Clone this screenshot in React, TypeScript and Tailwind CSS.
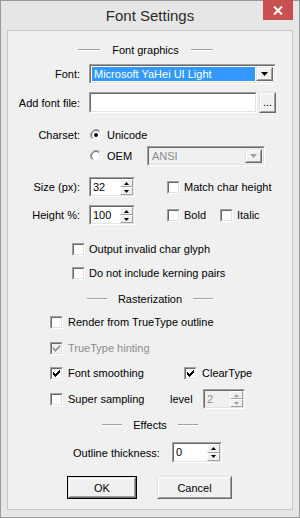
import clsx from 'clsx';
import type { ReactNode } from 'react';

// classic 3D edges
const sunkenOuter = 'border border-t-[#a0a0a0] border-l-[#a0a0a0] border-r-white border-b-white';
const sunkenInner = 'border border-t-[#696969] border-l-[#696969] border-r-[#e3e3e3] border-b-[#e3e3e3]';
const raisedOuter = 'border border-t-[#e3e3e3] border-l-[#e3e3e3] border-r-[#696969] border-b-[#696969]';
const raisedInner = 'border border-t-white border-l-white border-r-[#a0a0a0] border-b-[#a0a0a0]';

function Sunken({ className, inner, children }: { className?: string; inner?: string; children?: ReactNode }) {
  return (
    <div className={clsx('flex shrink-0', sunkenOuter, className)}>
      <div className={clsx('flex flex-1 min-w-0', sunkenInner, inner)}>{children}</div>
    </div>
  );
}

function Raised({ className, children }: { className?: string; children?: ReactNode }) {
  return (
    <div className={clsx('flex shrink-0', raisedOuter, className)}>
      <div className={clsx('flex flex-1 items-center justify-center bg-[#f0f0f0]', raisedInner)}>{children}</div>
    </div>
  );
}

function Arrow({ dir, color = '#000', w = 7, h = 4 }: { dir: 'up' | 'down'; color?: string; w?: number; h?: number }) {
  const pts = dir === 'down' ? `0,0 ${w},0 ${w / 2},${h}` : `0,${h} ${w},${h} ${w / 2},0`;
  return (
    <svg width={w} height={h} viewBox={`0 0 ${w} ${h}`}>
      <polygon points={pts} fill={color} />
    </svg>
  );
}

function SpinButtons({ disabled }: { disabled?: boolean }) {
  const c = disabled ? '#a0a0a0' : '#000';
  return (
    <div className="flex flex-col w-[13px] shrink-0">
      <div className={clsx('flex-1 flex items-center justify-center bg-[#f0f0f0]', raisedInner)}>
        <Arrow dir="up" color={c} w={5} h={3} />
      </div>
      <div className={clsx('flex-1 flex items-center justify-center bg-[#f0f0f0]', raisedInner)}>
        <Arrow dir="down" color={c} w={5} h={3} />
      </div>
    </div>
  );
}

function Spinner({ className, value, disabled }: { className: string; value: string; disabled?: boolean }) {
  return (
    <Sunken className={clsx('h-[20px]', className)} inner={disabled ? 'bg-[#f0f0f0]' : 'bg-white'}>
      <span className={clsx('flex-1 pl-[2px] leading-[16px]', disabled ? 'text-[#8d8d8d]' : 'text-black')}>{value}</span>
      <SpinButtons disabled={disabled} />
    </Sunken>
  );
}

function Check({ checked, disabled }: { checked?: boolean; disabled?: boolean }) {
  return (
    <Sunken className="w-[13px] h-[13px]" inner={clsx('items-center justify-center', disabled ? 'bg-[#f0f0f0]' : 'bg-white')}>
      {checked && (
        <svg width="7" height="7" viewBox="0 0 7 7">
          <path
            d="M0 2h1v1h1v1h1v-1h1v-1h1v-1h1v-1h1v3h-1v1h-1v1h-1v1h-1v1h-1v-1h-1v-1h-1z"
            fill={disabled ? '#a0a0a0' : '#000'}
          />
        </svg>
      )}
    </Sunken>
  );
}

function Radio({ checked }: { checked?: boolean }) {
  return (
    <svg width="12" height="12" viewBox="0 0 12 12" className="shrink-0">
      <circle cx="6" cy="6" r="5.5" fill="#fff" />
      <path d="M2.1 9.9 A5.5 5.5 0 0 1 9.9 2.1" stroke="#a0a0a0" fill="none" />
      <path d="M9.9 2.1 A5.5 5.5 0 0 1 2.1 9.9" stroke="#ffffff" fill="none" />
      <path d="M2.8 9.2 A4.5 4.5 0 0 1 9.2 2.8" stroke="#696969" fill="none" />
      <path d="M9.2 2.8 A4.5 4.5 0 0 1 2.8 9.2" stroke="#e3e3e3" fill="none" />
      {checked && <circle cx="6" cy="6" r="2" fill="#000" />}
    </svg>
  );
}

function Header({ label, line, gap, className }: { label: string; line: string; gap: string; className?: string }) {
  return (
    <div className={clsx('flex items-center justify-center h-[14px]', gap, className)}>
      <div className={clsx('h-[2px] border-t border-t-[#a0a0a0] border-b border-b-white', line)} />
      <span className="leading-[14px]">{label}</span>
      <div className={clsx('h-[2px] border-t border-t-[#a0a0a0] border-b border-b-white', line)} />
    </div>
  );
}

function Label({ children }: { children: ReactNode }) {
  return <span className="w-[72px] text-right leading-[14px] shrink-0">{children}</span>;
}

export default function App() {
  return (
    <div className="w-[300px] h-[518px] bg-[#e6e6e6] border border-[#9a9a9a] flex flex-col font-['Liberation_Sans',Arial,sans-serif] text-[11px] text-black select-none">
      {/* Title bar */}
      <div className="grid grid-cols-[1fr_auto_1fr] h-[29px] shrink-0">
        <div />
        <span className="pt-[6px] text-[15px] leading-[18px] text-[#2b2b2b]">Font Settings</span>
        <div className="flex justify-end items-start pr-[6px]">
          <div className="w-[30px] h-[20px] bg-[#c75050] flex items-center justify-center -mt-px">
            <svg width="10" height="9" viewBox="0 0 10 9">
              <path d="M1 0.5 L9 8.5 M9 0.5 L1 8.5" stroke="#fff" strokeWidth="2" />
            </svg>
          </div>
        </div>
      </div>

      {/* Client area */}
      <div className="flex-1 mx-[6px] mb-[7px] bg-[#f0f0f0] border border-[#c8c8c8] flex flex-col">
        <Header label="Font graphics" line="w-[22px]" gap="gap-[12px]" className="mt-[12px] pr-[9px]" />

        <div className="flex items-center mt-[7px]">
          <Label>Font:</Label>
          <Sunken className="ml-[9px] w-[187px] h-[20px]" inner="bg-white p-px">
            <span className="flex-1 bg-[#3399ff] text-white pl-[2px] leading-[14px]">Microsoft YaHei UI Light</span>
            <Raised className="w-[17px] ml-px">
              <Arrow dir="down" />
            </Raised>
          </Sunken>
        </div>

        <div className="flex items-center mt-[8px]">
          <Label>Add font file:</Label>
          <Sunken className="ml-[9px] w-[168px] h-[21px]" inner="bg-white" />
          <Raised className="ml-[2px] w-[17px] h-[21px]">
            <span className="leading-[10px] -mt-[2px]">...</span>
          </Raised>
        </div>

        <div className="flex items-center mt-[15px] h-[14px]">
          <Label>Charset:</Label>
          <span className="ml-[10px]">
            <Radio checked />
          </span>
          <span className="ml-[5px] leading-[14px]">Unicode</span>
        </div>

        <div className="flex items-center mt-[4px] pl-[82px]">
          <Radio />
          <span className="ml-[5px] w-[40px] leading-[14px]">OEM</span>
          <Sunken className="w-[118px] h-[20px]" inner="bg-[#f0f0f0] p-px">
            <span className="flex-1 text-[#8d8d8d] pl-[2px] leading-[14px]">ANSI</span>
            <Raised className="w-[17px]">
              <Arrow dir="down" color="#a0a0a0" />
            </Raised>
          </Sunken>
        </div>

        <div className="flex items-center mt-[11px]">
          <Label>Size (px):</Label>
          <Spinner className="ml-[9px] w-[46px]" value="32" />
          <span className="ml-[32px]">
            <Check />
          </span>
          <span className="ml-[4px] leading-[14px]">Match char height</span>
        </div>

        <div className="flex items-center mt-[8px]">
          <Label>Height %:</Label>
          <Spinner className="ml-[9px] w-[46px]" value="100" />
          <span className="ml-[32px]">
            <Check />
          </span>
          <span className="ml-[4px] w-[36px] leading-[14px]">Bold</span>
          <Check />
          <span className="ml-[4px] leading-[14px]">Italic</span>
        </div>

        <div className="flex items-center mt-[17px] h-[14px] pl-[64px]">
          <Check />
          <span className="ml-[4px] leading-[14px]">Output invalid char glyph</span>
        </div>

        <div className="flex items-center mt-[10px] h-[14px] pl-[64px]">
          <Check />
          <span className="ml-[4px] leading-[14px]">Do not include kerning pairs</span>
        </div>

        <Header label="Rasterization" line="w-[20px]" gap="gap-[11px]" className="mt-[12px]" />

        <div className="flex items-center mt-[9px] h-[14px] pl-[42px]">
          <Check />
          <span className="ml-[5px] leading-[14px]">Render from TrueType outline</span>
        </div>

        <div className="flex items-center mt-[12px] h-[14px] pl-[42px]">
          <Check checked disabled />
          <span className="ml-[5px] leading-[14px] text-[#8d8d8d]">TrueType hinting</span>
        </div>

        <div className="flex items-center mt-[11px] h-[14px] pl-[42px]">
          <Check checked />
          <span className="ml-[5px] w-[116px] leading-[14px]">Font smoothing</span>
          <Check checked />
          <span className="ml-[5px] leading-[14px]">ClearType</span>
        </div>

        <div className="flex items-center mt-[9px] pl-[42px]">
          <Check />
          <span className="ml-[5px] w-[102px] leading-[14px]">Super sampling</span>
          <span className="w-[33px] leading-[14px]">level</span>
          <Spinner className="w-[42px]" value="2" disabled />
        </div>

        <Header label="Effects" line="w-[20px]" gap="gap-[11px]" className="mt-[9px]" />

        <div className="flex items-center mt-[10px] h-[21px] pl-[65px]">
          <span className="w-[99px] leading-[14px]">Outline thickness:</span>
          <Spinner className="w-[50px] h-[21px]" value="0" />
        </div>

        <div className="flex items-center mt-[13px] pl-[59px] gap-[20px]">
          <div className="border border-black">
            <Raised className="w-[68px] h-[21px]">
              <span className="leading-[14px]">OK</span>
            </Raised>
          </div>
          <Raised className="w-[75px] h-[23px]">
            <span className="leading-[14px]">Cancel</span>
          </Raised>
        </div>
      </div>
    </div>
  );
}
